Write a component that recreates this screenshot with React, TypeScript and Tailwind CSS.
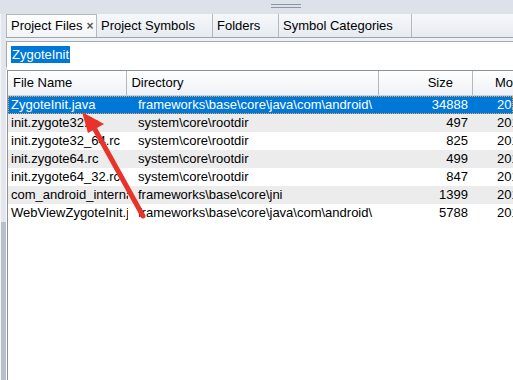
import React from "react";

const rows = [
  { name: "ZygoteInit.java", dir: "frameworks\\base\\core\\java\\com\\android\\", size: "34888", sel: true },
  { name: "init.zygote32.rc", dir: "system\\core\\rootdir", size: "497" },
  { name: "init.zygote32_64.rc", dir: "system\\core\\rootdir", size: "825" },
  { name: "init.zygote64.rc", dir: "system\\core\\rootdir", size: "499" },
  { name: "init.zygote64_32.rc", dir: "system\\core\\rootdir", size: "847" },
  { name: "com_android_internal_os_Zygote.cpp", dir: "frameworks\\base\\core\\jni", size: "1399" },
  { name: "WebViewZygoteInit.java", dir: "frameworks\\base\\core\\java\\com\\android\\", size: "5788" },
];

export default function App() {
  return (
    <div
      className="w-[513px] h-[380px] overflow-hidden flex flex-col bg-white text-black relative"
      style={{ fontFamily: '"Liberation Sans", Arial, sans-serif' }}
    >
      {/* top strip */}
      <div className="h-[14px] bg-[#dde2ea] flex justify-center items-start pt-[4px]">
        <div className="w-[30px] ml-[58px] flex flex-col gap-[2px]">
          <div className="h-px bg-[#8f959e]" />
          <div className="h-px bg-[#8f959e]" />
        </div>
      </div>
      <div className="flex-1 flex min-h-0">
        {/* left strip */}
        <div className="w-[6px] flex flex-col border-l border-[#f4f6f8]">
          <div className="h-[208px] bg-[#e3e7ed]" />
          <div className="flex-1 bg-[#b7bfcb]" />
        </div>
        <div className="flex-1 flex flex-col min-w-0">
          {/* tabs */}
          <div className="h-[24px] flex bg-gradient-to-b from-[#f6f8fb] to-[#e7ebf1] border-b border-[#9ea4ab] text-[13px]">
            <div className="w-[91px] flex items-center pl-[4px] bg-gradient-to-b from-[#ffffff] to-[#f1f3f6] border-l border-t border-[#b4b9c0] border-r">
              <span>Project Files</span>
              <span className="ml-[4px] text-[#555] text-[12px] font-bold leading-none">×</span>
            </div>
            <div className="w-[116px] flex items-center pl-[4px] border-r border-[#b4b9c0]">Project Symbols</div>
            <div className="w-[66px] flex items-center pl-[4px] border-r border-[#b4b9c0]">Folders</div>
            <div className="w-[133px] flex items-center pl-[4px] border-r border-[#b4b9c0]">Symbol Categories</div>
            <div className="flex-1" />
          </div>
          <div className="h-[3px] bg-[#eef1f5]" />
          {/* search box */}
          <div className="h-[26px] border-t border-l border-[#a3a8ae] bg-white flex items-center pl-[4px]">
            <span className="bg-[#0078d7] text-white text-[13px] leading-[17px] px-px">ZygoteInit</span>
          </div>
          <div className="h-[3px] bg-white border-l border-[#d6d9dd]" />
          {/* table */}
          <div className="flex-1 border-t border-l border-[#8c9097] ml-px flex flex-col text-[13px]">
            <div className="h-[25px] flex bg-gradient-to-b from-[#ffffff] to-[#eef1f5] border-b border-[#c9ced5]">
              <div className="w-[120px] border-r border-[#b3b8bf] flex items-center pl-[5px]">File Name</div>
              <div className="w-[253px] border-r border-[#b3b8bf] flex items-center pl-[4px]">Directory</div>
              <div className="w-[94px] border-r border-[#b3b8bf] flex items-center justify-end pr-[19px]">Size</div>
              <div className="flex-1 flex items-center pl-[22px] whitespace-nowrap">Mo</div>
            </div>
            {rows.map((r, i) => (
              <div
                key={i}
                className={
                  "h-[18px] flex items-center whitespace-nowrap " +
                  (r.sel
                    ? "bg-[#0078d7] text-white outline outline-1 outline-dotted outline-[#f7a440] -outline-offset-1"
                    : i % 2 === 1
                    ? "bg-[#ececec]"
                    : "bg-white")
                }
              >
                <div className="w-[120px] overflow-hidden pl-[3px]">{r.name}</div>
                <div className="w-[253px] overflow-hidden pl-[10px]">{r.dir}</div>
                <div className="w-[94px] text-right pr-[7px]">{r.size}</div>
                <div className="flex-1 overflow-hidden pl-[22px]">2017</div>
              </div>
            ))}
          </div>
        </div>
      </div>
      {/* red arrow annotation */}
      <svg className="absolute left-0 top-0 pointer-events-none" width="513" height="380">
        <line x1="143" y1="216" x2="92" y2="124" stroke="#e8332b" strokeWidth="5" strokeLinecap="round" />
        <polygon points="82,112 104,124 88,133" fill="#e8332b" />
      </svg>
    </div>
  );
}
